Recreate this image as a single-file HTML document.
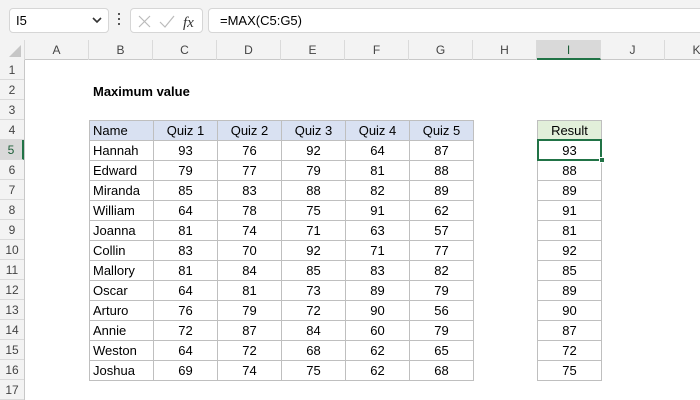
<!DOCTYPE html>
<html><head><style>
*{margin:0;padding:0;box-sizing:border-box}
body{width:700px;height:400px;overflow:hidden;background:#fff;font-family:"Liberation Sans",Arial,sans-serif;position:relative;color:#000}
.tb{position:absolute;left:0;top:0;width:700px;height:40px;background:#f3f3f3}
.nb{position:absolute;left:9px;top:8px;width:100px;height:25px;background:#fff;border:1px solid #d6d6d6;border-radius:4px;font-size:13px;padding:4px 0 0 6px}
.fx{position:absolute;left:130px;top:8px;width:73px;height:25px;background:#fff;border:1px solid #d6d6d6;border-radius:4px}
.fb{position:absolute;left:208px;top:8px;width:500px;height:25px;background:#fff;border:1px solid #d6d6d6;border-radius:4px;font-size:13px;padding:4px 0 0 11px}
.ch{position:absolute;top:40px;left:0;width:700px;height:20px;background:#f3f3f3;border-bottom:1px solid #c8c8c8}
.ch div{position:absolute;top:0;height:20px;width:64px;text-align:center;font-size:12px;line-height:20px;color:#444;border-right:1px solid #dadada}
.rh{position:absolute;left:0;top:60px;width:25px;height:340px;background:#f3f3f3;border-right:1px solid #c8c8c8}
.rh div{height:20px;text-align:center;font-size:12px;line-height:20px;color:#444;border-bottom:1px solid #dadada}
table{position:absolute;border-collapse:collapse;font-size:13px}
td{height:20px;width:64px;border:1px solid #bfbfbf;text-align:center;padding:1px 0 0 0;background:#fff;line-height:18px}
td.n{text-align:left;padding-left:3px}
tr.h td{background:#d9e1f2}
</style></head><body>
<div class="tb">
<div class="nb">I5<svg style="position:absolute;right:6px;top:8px" width="10" height="7"><path d="M1 1L5 5L9 1" stroke="#333" stroke-width="1.6" fill="none"/></svg></div>
<div style="position:absolute;left:118px;top:13px;width:2px;height:2px;background:#555;box-shadow:0 5px #555,0 10px #555"></div>
<div class="fx"><svg width="73" height="25"><path d="M8 7L19 18M19 7L8 18" stroke="#bbb" stroke-width="1.2"/><path d="M29 13L34 18L43 7" stroke="#bbb" stroke-width="1.2" fill="none"/><text x="52" y="18" font-family="Liberation Serif" font-style="italic" font-size="15" fill="#333">fx</text></svg></div>
<div class="fb">=MAX(C5:G5)</div>
</div>
<div class="ch">
<div style="left:0;width:25px;background:#f3f3f3"><svg width="25" height="20"><path d="M21 5L21 17L9 17Z" fill="#c6c6c6"/></svg></div>
<div style="left:25px">A</div><div style="left:89px">B</div><div style="left:153px">C</div><div style="left:217px">D</div><div style="left:281px">E</div><div style="left:345px">F</div><div style="left:409px">G</div><div style="left:473px">H</div><div style="left:537px;background:#d9d9d9;border-bottom:2px solid #217346;color:#1d5e38">I</div><div style="left:601px">J</div><div style="left:665px">K</div>
</div>
<div class="rh"><div>1</div><div>2</div><div>3</div><div>4</div><div style="background:#d9d9d9;border-right:2px solid #217346;color:#1d5e38">5</div><div>6</div><div>7</div><div>8</div><div>9</div><div>10</div><div>11</div><div>12</div><div>13</div><div>14</div><div>15</div><div>16</div><div>17</div></div>
<div style="position:absolute;left:93px;top:84px;font-size:13px;font-weight:bold">Maximum value</div>
<table style="left:89px;top:120px">
<tr class="h"><td class="n">Name</td><td>Quiz 1</td><td>Quiz 2</td><td>Quiz 3</td><td>Quiz 4</td><td>Quiz 5</td></tr>
<tr><td class="n">Hannah</td><td>93</td><td>76</td><td>92</td><td>64</td><td>87</td></tr>
<tr><td class="n">Edward</td><td>79</td><td>77</td><td>79</td><td>81</td><td>88</td></tr>
<tr><td class="n">Miranda</td><td>85</td><td>83</td><td>88</td><td>82</td><td>89</td></tr>
<tr><td class="n">William</td><td>64</td><td>78</td><td>75</td><td>91</td><td>62</td></tr>
<tr><td class="n">Joanna</td><td>81</td><td>74</td><td>71</td><td>63</td><td>57</td></tr>
<tr><td class="n">Collin</td><td>83</td><td>70</td><td>92</td><td>71</td><td>77</td></tr>
<tr><td class="n">Mallory</td><td>81</td><td>84</td><td>85</td><td>83</td><td>82</td></tr>
<tr><td class="n">Oscar</td><td>64</td><td>81</td><td>73</td><td>89</td><td>79</td></tr>
<tr><td class="n">Arturo</td><td>76</td><td>79</td><td>72</td><td>90</td><td>56</td></tr>
<tr><td class="n">Annie</td><td>72</td><td>87</td><td>84</td><td>60</td><td>79</td></tr>
<tr><td class="n">Weston</td><td>64</td><td>72</td><td>68</td><td>62</td><td>65</td></tr>
<tr><td class="n">Joshua</td><td>69</td><td>74</td><td>75</td><td>62</td><td>68</td></tr>
</table>
<table style="left:537px;top:120px">
<tr><td style="background:#e2efda">Result</td></tr>
<tr><td>93</td></tr><tr><td>88</td></tr><tr><td>89</td></tr><tr><td>91</td></tr><tr><td>81</td></tr><tr><td>92</td></tr><tr><td>85</td></tr><tr><td>89</td></tr><tr><td>90</td></tr><tr><td>87</td></tr><tr><td>72</td></tr><tr><td>75</td></tr>
</table>
<div style="position:absolute;left:537px;top:139px;width:65px;height:22px;border:2px solid #217346"></div>
<div style="position:absolute;left:599px;top:157px;width:6px;height:6px;background:#217346;border:1px solid #fff"></div>
</body></html>
